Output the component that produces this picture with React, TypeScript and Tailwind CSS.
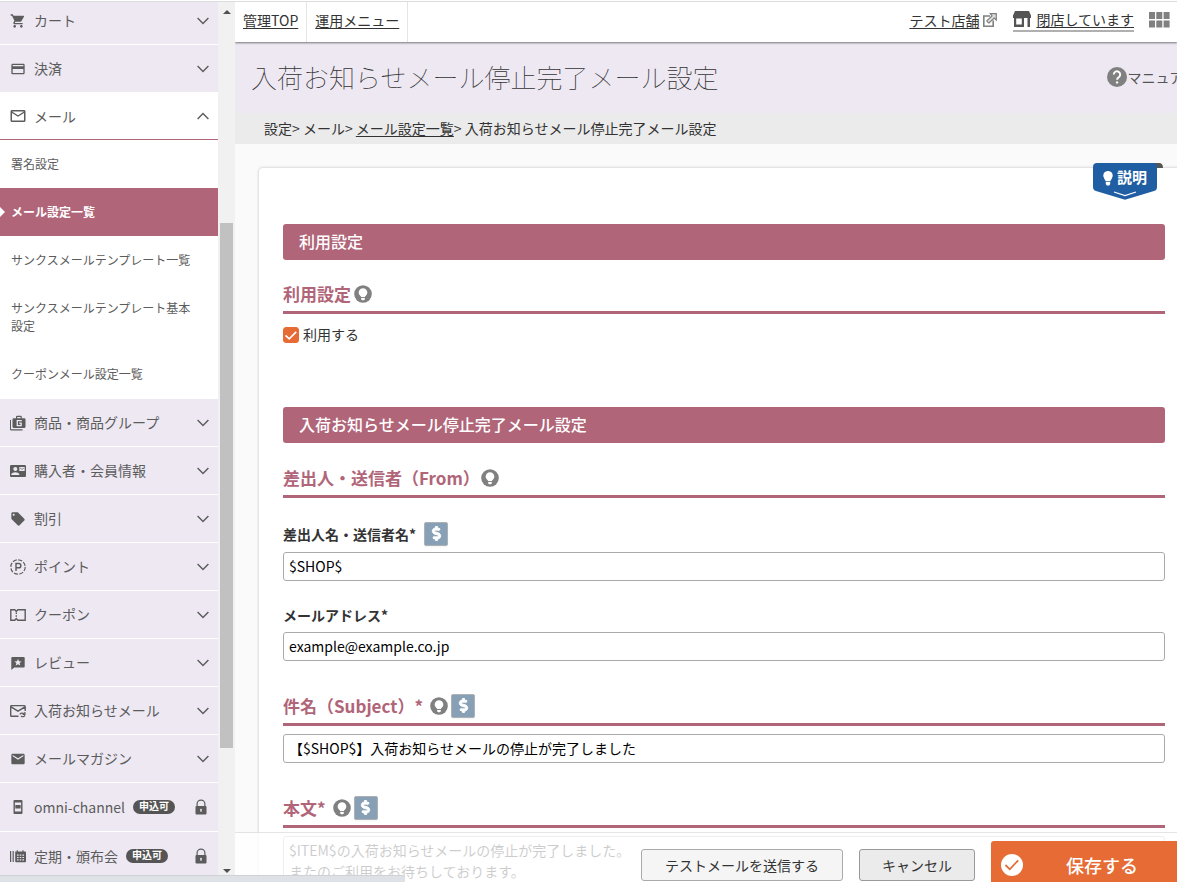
import React from "react";
import {
  MdShoppingCart,
  MdCreditCard,
  MdMailOutline,
  MdContactMail,
  MdLocalOffer,
  MdEmail,
} from "react-icons/md";
import { FaDollarSign } from "react-icons/fa";

const GoodsIcon = () => (
  <svg viewBox="0 0 16 16" className="size-4" fill="currentColor">
    <path d="M1 5v9.2h11.5v1.3H1.2A1.2 1.2 0 0 1 0 14.3V5z" />
    <path
      fillRule="evenodd"
      d="M3.6 3.2H6V2a1.2 1.2 0 0 1 1.2-1.3h3.4A1.2 1.2 0 0 1 11.800 2v1.200h2.600A1.200 1.200 0 0 1 15.500 4.400v7.400a1.200 1.200 0 0 1-1.100 1.200H3.600a1.200 1.200 0 0 1-1.100-1.200V4.400a1.200 1.200 0 0 1 1.100-1.200zM7.200 2v1.200h3.400V2zM6.600 5v6.200h5.200V7.600H9.200v1.200h1.300V10H7.900V6.200h3.900V5z"
    />
  </svg>
);

const PointIcon = () => (
  <svg viewBox="0 0 16 16" className="size-4" fill="none" stroke="currentColor">
    <circle cx="8" cy="8" r="7.200" strokeWidth="1.200" strokeDasharray="4.200 1.450" />
    <path d="M6 12V4.500h2.700a2.100 2.100 0 0 1 0 4.300H6" strokeWidth="1.400" />
  </svg>
);

const CouponIcon = () => (
  <svg viewBox="0 0 16 16" className="size-4" fill="none" stroke="currentColor" strokeWidth="1.400">
    <path d="M.8 2.800h4L6.300 4.500 7.800 2.800h7.400v10.400H7.800L6.300 11.500 4.800 13.200h-4z" />
    <path d="M6.300 5.500v5.500" strokeDasharray="1.400 1.400" />
  </svg>
);

const ReviewIcon = () => (
  <svg viewBox="0 0 16 16" className="size-4" fill="currentColor">
    <path
      fillRule="evenodd"
      d="M2.300 2h11.400a1 1 0 0 1 1 1v8.400a1 1 0 0 1-1 1H4.200L1.300 15V3a1 1 0 0 1 1-1zM8 3.700 7 6.300l-2.600.1 2 1.700-.7 2.500L8 9.200l2.300 1.400-.7-2.500 2-1.700-2.600-.1z"
    />
  </svg>
);

const RestockMailIcon = () => (
  <svg viewBox="0 0 16 16" className="size-4" fill="none" stroke="currentColor" strokeWidth="1.400">
    <path d="M8.500 13.300H1.600a.9.900 0 0 1-.9-.9V3.500a.9.900 0 0 1 .9-.9h12.700a.9.900 0 0 1 .9.900V8M1 3.800l7 4.400 7-4.400" />
    <path d="M10 11.500c.5-1.500 2.500-2 4-.7m.9-1.800v2.300h-2.300M15 12.300c-.7 1.500-2.700 1.900-4 .7" strokeWidth="1.200" />
  </svg>
);

const PhoneIcon = () => (
  <svg viewBox="0 0 16 16" className="size-4" fill="currentColor">
    <path
      fillRule="evenodd"
      d="M4.500 1h7a1 1 0 0 1 1 1v12a1 1 0 0 1-1 1h-7a1 1 0 0 1-1-1V2a1 1 0 0 1 1-1zm.4 2.500v9h6.200v-9z"
    />
    <path d="M5.300 6h5.400v3.500H5.300z" />
  </svg>
);

const ScheduleIcon = () => (
  <svg viewBox="0 0 16 16" className="size-4" fill="currentColor">
    <path d="M0 3h1.200v11H0zM2.600 3h1.200v11H2.600z" />
    <path
      fillRule="evenodd"
      d="M5.200 3.500h1.500V2.200h1.200v1.300h4.500V2.200h1.200v1.300H15a1 1 0 0 1 1 1v8.700a1 1 0 0 1-1 1H6.200a1 1 0 0 1-1-1zM7 6.500v1.200h1.600V6.500zm2.700 0v1.200h1.600V6.500zm2.700 0v1.200H14V6.500zM7 8.900v1.200h1.600V8.900zm2.700 0v1.200h1.600V8.900zm2.700 0v1.200H14V8.900zM7 11.300v1.200h1.600v-1.200zm2.700 0v1.200h1.600v-1.200zm2.700 0v1.200H14v-1.200z"
    />
  </svg>
);

const Chevron = ({ up }: { up?: boolean }) => (
  <svg viewBox="0 0 12 8" className="h-2 w-3" fill="none" stroke="currentColor" strokeWidth="1.400">
    <path d={up ? "M.6 7 6 1.400 11.400 7" : "M.6 1 6 6.600 11.400 1"} />
  </svg>
);

const LockIcon = () => (
  <svg viewBox="0 0 12 16" className="h-4 w-3" fill="currentColor">
    <path
      fillRule="evenodd"
      d="M1.500 7V5a4.500 4.500 0 0 1 9 0v2a1 1 0 0 1 1 1v6.500a1 1 0 0 1-1 1h-9a1 1 0 0 1-1-1V8a1 1 0 0 1 1-1zm1.200 0h6.600V5a3.300 3.300 0 0 0-6.600 0zM6 9.800a1.100 1.100 0 0 0-.5 2V13h1v-1.200a1.100 1.100 0 0 0-.5-2z"
    />
  </svg>
);

const bulb =
  "M9 3.200a4.300 4.300 0 0 0-2.600 7.700c.5.400.7.800.7 1.300h3.800c0-.5.200-.9.700-1.300A4.300 4.300 0 0 0 9 3.200zM7.200 12.900h3.600v1.500l-1 .8H8.200l-1-.8z";

const HintButton = () => (
  <button type="button" aria-label="ヒント" className="flex">
    <svg viewBox="0 0 18 18" className="size-[18px]">
      <circle cx="9" cy="9" r="8.800" fill="#808080" />
      <path d={bulb} fill="#fff" />
      <path d="M7.200 12.500h3.600" stroke="#808080" strokeWidth=".7" />
    </svg>
  </button>
);

const VariableButton = () => (
  <button
    type="button"
    aria-label="変数を挿入"
    className="flex size-6 items-center justify-center rounded-xs border border-[#adb1b4] bg-[#87a0b5] pb-px text-white shadow-xs"
  >
    <FaDollarSign className="size-[15px]" stroke="currentColor" strokeWidth={30} />
  </button>
);

const Banner = ({ children }: { children: React.ReactNode }) => (
  <h2 className="flex h-9 items-center rounded-[3px] bg-[#b06579] px-4 pb-0.5 text-base font-medium text-white">
    {children}
  </h2>
);

const SectionTitle = ({
  label,
  htmlFor,
  children,
}: {
  label: string;
  htmlFor?: string;
  children: React.ReactNode;
}) => (
  <div className="flex h-9 items-center border-b-3 border-[#b06579] pb-px text-[17px] font-bold text-[#b06579]">
    {htmlFor ? <label htmlFor={htmlFor}>{label}</label> : <h3>{label}</h3>}
    {children}
  </div>
);

const TextField = ({ id, value }: { id: string; value: string }) => (
  <input
    id={id}
    type="text"
    defaultValue={value}
    className="block h-[29px] w-full rounded-[3px] border border-[#aaa] bg-white px-[5px] pb-0.5 text-sm text-black"
  />
);

type Item = { label: string; icon: React.ReactNode; locked?: boolean };

const topItems: Item[] = [
  { label: "カート", icon: <MdShoppingCart className="size-4" /> },
  { label: "決済", icon: <MdCreditCard className="size-[18px]" /> },
];

const mailItems = [
  "署名設定",
  "メール設定一覧",
  "サンクスメールテンプレート一覧",
  "サンクスメールテンプレート基本設定",
  "クーポンメール設定一覧",
];

const bottomItems: Item[] = [
  { label: "商品・商品グループ", icon: <GoodsIcon /> },
  { label: "購入者・会員情報", icon: <MdContactMail className="size-4" /> },
  { label: "割引", icon: <MdLocalOffer className="size-[18px]" /> },
  { label: "ポイント", icon: <PointIcon /> },
  { label: "クーポン", icon: <CouponIcon /> },
  { label: "レビュー", icon: <ReviewIcon /> },
  { label: "入荷お知らせメール", icon: <RestockMailIcon /> },
  { label: "メールマガジン", icon: <MdEmail className="size-[18px]" /> },
  { label: "omni-channel", icon: <PhoneIcon />, locked: true },
  { label: "定期・頒布会", icon: <ScheduleIcon />, locked: true },
];

const NavRow = ({ item }: { item: Item }) => (
  <button
    type="button"
    className={`flex w-full shrink-0 items-center border-b border-white bg-[#ede8f2] pr-[9px] pl-[10px] text-left ${
      item.locked ? "h-[49px]" : "h-12"
    }`}
  >
    <span className="mr-2 flex w-4 shrink-0 justify-center">{item.icon}</span>
    <span className="pb-px">{item.label}</span>
    {item.locked && (
      <span className="ml-2 flex h-[14px] items-center rounded-full bg-[#555] px-[6px] pb-px text-[10px] font-bold text-white">
        申込可
      </span>
    )}
    <span className={item.locked ? "mr-[2px] ml-auto" : "ml-auto"}>
      {item.locked ? <LockIcon /> : <Chevron />}
    </span>
  </button>
);

const Sidebar = () => (
  <div className="flex w-[235px] shrink-0 bg-[#f1f1f1]">
    <nav className="flex w-[218px] flex-col justify-start overflow-hidden bg-white text-sm text-[#5c5c5c]">
      <div className="-mt-[5px] flex flex-col">
        {topItems.map((item) => (
          <NavRow key={item.label} item={item} />
        ))}
        <button
          type="button"
          className="flex h-[47px] items-center border-b border-[#b06579] bg-white pr-[9px] pl-[10px] text-left"
        >
          <span className="mr-2 flex w-4 justify-center">
            <MdMailOutline className="size-[18px] shrink-0" />
          </span>
          <span className="pb-px">メール</span>
          <span className="ml-auto">
            <Chevron up />
          </span>
        </button>
        <ul className="pb-px text-xs leading-[18px]">
          {mailItems.map((label, i) => (
            <li key={label}>
              <a
                href="#"
                className={
                  i === 1
                    ? "relative block bg-[#b06579] py-[15px] pr-5 pl-[11px] font-bold text-white"
                    : "block py-[15px] pr-5 pl-[11px]"
                }
              >
                {i === 1 && (
                  <svg viewBox="0 0 5 10" className="absolute top-[19px] left-0 h-[10px] w-[5px]" fill="#fff">
                    <path d="M0 0l5 5-5 5z" />
                  </svg>
                )}
                {label}
              </a>
            </li>
          ))}
        </ul>
        {bottomItems.map((item) => (
          <NavRow key={item.label} item={item} />
        ))}
      </div>
    </nav>
    <div className="flex w-[17px] flex-col items-center pt-2 pb-2">
      <svg viewBox="0 0 8 4" className="h-1 w-2" fill="#505050">
        <path d="M0 4l4-4 4 4z" />
      </svg>
      <div className="flex w-full flex-1 flex-col px-0.5">
        <div className="basis-[24.5%]" />
        <div className="basis-[61.3%] bg-[#c1c1c1]" />
      </div>
      <svg viewBox="0 0 8 4" className="mb-px h-1 w-2" fill="#505050">
        <path d="M0 0l4 4 4-4z" />
      </svg>
    </div>
  </div>
);

const Header = () => (
  <header className="relative z-10 flex h-10 shrink-0 items-stretch bg-white text-sm text-[#333] shadow-[0_1px_2px_rgba(0,0,0,0.5)]">
    <div className="flex items-center border-r border-[#e5e5e5] px-2 pb-1">
      <a href="#" className="underline underline-offset-2">管理TOP</a>
    </div>
    <div className="flex items-center border-r border-[#e5e5e5] px-2 pb-1">
      <a href="#" className="underline underline-offset-2">運用メニュー</a>
    </div>
    <div className="ml-auto flex items-center pr-[7px] pb-1">
      <a href="#" className="flex items-center gap-1">
        <span className="underline underline-offset-2">テスト店舗</span>
        <svg viewBox="0 0 14 14" className="size-[14px]" fill="none" stroke="#808080" strokeWidth="1.600">
          <path d="M7 3H.8v10.200h9.400V7.500" />
          <path d="M4.800 9.200l-1-1.300L9 3 7.300.7h6V7L11.200 5 6 10z" strokeWidth="1.200" fill="#ddd" />
        </svg>
      </a>
      <a href="#" className="ml-4 flex h-[23px] items-center gap-[5px] border-b-2 border-[#b0b0b0]">
        <svg viewBox="0 0 18 16" className="h-4 w-[18px]" fill="#555">
          <path
            fillRule="evenodd"
            d="M2 0h14l2 4.500V7h-1v9h-2.500V7H11v9H1V7H0V4.500zM3.200 7.500v6h5.600v-6z"
          />
        </svg>
        <span className="underline underline-offset-2">閉店しています</span>
      </a>
      <button type="button" aria-label="アプリ一覧" className="ml-[15px]">
        <svg viewBox="0 0 21 16" className="h-4 w-[21px]" fill="#808080">
          <path d="M0 0h6v7H0zM7.300 0h6v7h-6zM14.600 0h6v7h-6zM0 8.500h6v7H0zM7.300 8.500h6v7h-6zM14.600 8.500h6v7h-6z" />
        </svg>
      </button>
    </div>
  </header>
);

const HelpTab = () => (
  <button type="button" className="absolute -top-[5px] right-[26px] h-[37px] w-[70px] text-white">
    <svg viewBox="0 0 70 37" className="absolute inset-0 size-full">
      <path d="M60 0h6q4 0 4 5H60z" fill="#555" />
      <path d="M4 0h56q4 0 4 4v20q0 3-3 4L32 36.800 3 28q-3-1-3-4V4q0-4 4-4z" fill="#205ea3" />
      <path d="M21 29l11 3.500L43 29" fill="none" stroke="#fff" strokeWidth="1.200" />
      <path
        d="M15 8a4.800 4.800 0 0 0-3.600 8c.7.800 1 1.500 1.200 2.300h4.800c.2-.8.500-1.500 1.200-2.300A4.800 4.800 0 0 0 15 8zM12.800 19h4.400v2l-1 1.500h-2.400l-1-1.500z"
        fill="#fff"
      />
    </svg>
    <span className="relative flex h-8 pl-6 text-[15px] font-bold">説明</span>
  </button>
);

export default function App() {
  return (
    <div className="relative flex h-screen flex-col overflow-hidden bg-white pt-px font-['Noto_Sans_CJK_JP',sans-serif]">
      <div className="flex min-h-0 flex-1 border-t border-[#dadce0]">
        <Sidebar />
        <div className="relative flex min-w-0 flex-1 flex-col overflow-hidden">
          <Header />
          <main className="relative min-h-0 w-[calc(100%+36px)] flex-1 overflow-hidden bg-[#fafafa] text-sm text-[#333]">
            <div className="flex h-[71px] items-center justify-between bg-[#ede8f2] pr-4 pb-0.5 pl-4">
              <h1 className="text-[26px] font-thin">入荷お知らせメール停止完了メール設定</h1>
              <a href="#" className="flex items-center text-[#555]">
                <svg viewBox="0 0 20 20" className="size-5">
                  <circle cx="10" cy="10" r="10" fill="#808080" />
                  <path
                    d="M6.800 7.500a3.200 3.200 0 1 1 5.300 2.400c-1.100.9-2 1.300-2 2.900"
                    fill="none"
                    stroke="#fff"
                    strokeWidth="1.900"
                  />
                  <circle cx="10.100" cy="15.400" r="1.200" fill="#fff" />
                </svg>
                マニュアル
              </a>
            </div>
            <div className="flex h-[31px] items-center bg-[#ebebeb] px-[29px] pb-0.5">
              <span>設定&gt;&nbsp;</span>
              <span>メール&gt;&nbsp;</span>
              <a href="#" className="underline underline-offset-2">メール設定一覧</a>
              <span>&gt;&nbsp;入荷お知らせメール停止完了メール設定</span>
            </div>

            <div className="relative mx-6 mt-6 rounded-sm bg-white px-6 pt-14 shadow-[0_0_3px_rgba(0,0,0,0.25)]">
              <HelpTab />
              <section>
                <Banner>利用設定</Banner>
                <div className="mt-[18px]">
                  <SectionTitle label="利用設定">
                    <span className="ml-[3px]">
                      <HintButton />
                    </span>
                  </SectionTitle>
                </div>
                <label className="mt-[13px] flex h-4 items-center gap-1">
                  <span className="relative flex size-4">
                    <input
                      type="checkbox"
                      defaultChecked
                      className="size-4 appearance-none rounded-[3px] border border-[#e66b35] bg-white checked:bg-[#e66b35]"
                    />
                    <svg
                      viewBox="0 0 16 16"
                      className="pointer-events-none absolute inset-0"
                      fill="none"
                      stroke="#fff"
                      strokeWidth="1.700"
                    >
                      <path d="M2.500 8.300l3.700 3.600 7-7" />
                    </svg>
                  </span>
                  <span className="pb-0.5">利用する</span>
                </label>
              </section>

              <section className="mt-16">
                <Banner>入荷お知らせメール停止完了メール設定</Banner>
                <div className="mt-[19px]">
                  <SectionTitle label="差出人・送信者（From）">
                    <span className="ml-px">
                      <HintButton />
                    </span>
                  </SectionTitle>
                </div>
                <div className="mt-6 mb-[6px] flex h-6 items-center gap-2">
                  <label htmlFor="sender" className="font-bold">差出人名・送信者名*</label>
                  <VariableButton />
                </div>
                <TextField id="sender" value="$SHOP$" />
                <div className="mt-[22px] mb-[5px] flex h-6 items-center">
                  <label htmlFor="address" className="font-bold">メールアドレス*</label>
                </div>
                <TextField id="address" value="example@example.co.jp" />
                <div className="mt-[29px] mb-2">
                  <SectionTitle label="件名（Subject）*" htmlFor="subject">
                    <span className="ml-[7px] flex items-center gap-[3px]">
                      <HintButton />
                      <VariableButton />
                    </span>
                  </SectionTitle>
                </div>
                <TextField id="subject" value="【$SHOP$】入荷お知らせメールの停止が完了しました" />
                <div className="mt-[29px] mb-2">
                  <SectionTitle label="本文*" htmlFor="body">
                    <span className="ml-[7px] flex items-center gap-[3px]">
                      <HintButton />
                      <VariableButton />
                    </span>
                  </SectionTitle>
                </div>
                <textarea
                  id="body"
                  rows={10}
                  className="block w-full resize-none rounded-[3px] border border-[#aaa] px-[5px] py-[3px] text-sm leading-[21px] text-black"
                  defaultValue={"$ITEM$の入荷お知らせメールの停止が完了しました。\nまたのご利用をお待ちしております。"}
                />
              </section>
            </div>

            <footer className="absolute inset-x-0 bottom-0 flex h-[50px] items-start justify-end gap-4 border-t border-black/10 bg-white/80 pt-2 text-[#333]">
              <button type="button" className="mt-2 h-8 rounded-[3px] border border-[#aaa] bg-[#f5f5f5] px-[23px]">
                テストメールを送信する
              </button>
              <button type="button" className="mt-2 h-8 rounded-[3px] border border-[#999] bg-[#ebebeb] px-[22px]">
                キャンセル
              </button>
              <button
                type="button"
                className="relative h-12 w-[222px] rounded-[3px] bg-[#e66b35] text-lg font-medium text-white"
              >
                <svg viewBox="0 0 22 22" className="absolute top-[13px] left-[10px] size-[22px]">
                  <circle cx="11" cy="11" r="11" fill="#fff" />
                  <path d="M4.500 11l4.300 4.300 8.400-9" fill="none" stroke="#e66b35" strokeWidth="1.800" />
                </svg>
                保存する
              </button>
            </footer>
          </main>
        </div>
      </div>
      <div className="absolute bottom-0 left-0 z-20 h-[7px] w-[405px] rounded-tr-[3px] border-t border-[#cfd1d5] bg-[#dee1e6]" />
    </div>
  );
}
